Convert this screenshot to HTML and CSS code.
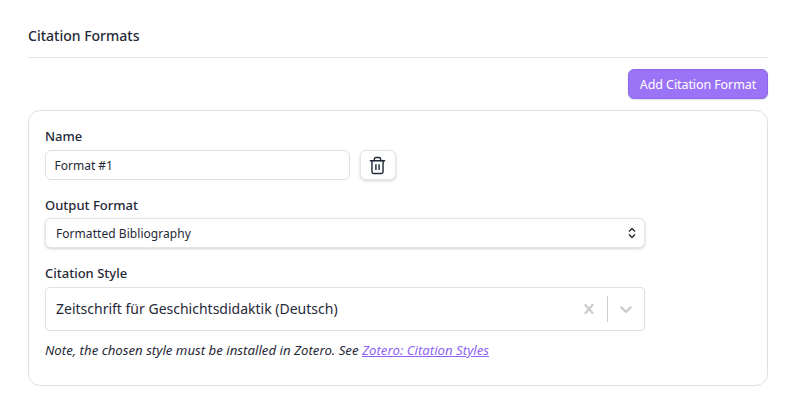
FILE: index.html
```html
<!DOCTYPE html>
<html lang="en">
<head>
<meta charset="utf-8">
<title>Citation Formats</title>
<link rel="stylesheet" href="styles.css">
</head>
<body>
<main class="page">
  <h2 class="title">Citation Formats</h2>
  <div class="actions"><button class="btn-add" type="button">Add Citation Format</button></div>
  <section class="card">
    <div class="field field-name">
      <label class="label">Name</label>
      <div class="name-row">
        <input class="input" type="text" value="Format #1">
        <button class="btn-icon" type="button" aria-label="Delete">
          <svg class="trash" width="19" height="19" viewBox="0 0 24 24" fill="none" stroke="#1f2937" stroke-width="1.8" stroke-linecap="round" stroke-linejoin="round"><path d="M3 6h18"/><path d="M5 6v14a2 2 0 0 0 2 2h10a2 2 0 0 0 2-2V6"/><path d="M8 6V4a2 2 0 0 1 2-2h4a2 2 0 0 1 2 2v2"/><path d="M10 11v6"/><path d="M14 11v6"/></svg>
        </button>
      </div>
    </div>
    <div class="field field-output">
      <label class="label">Output Format</label>
      <div class="select">
        <span>Formatted Bibliography</span>
        <svg width="10" height="12" viewBox="0 0 10 12" fill="none" stroke="#1f2937" stroke-width="1.4"><path d="M2 4.5 5 1.5 8 4.5"/><path d="M2 7.5 5 10.5 8 7.5"/></svg>
      </div>
    </div>
    <div class="field field-style">
      <label class="label">Citation Style</label>
      <div class="combo">
        <span class="combo-value">Zeitschrift für Geschichtsdidaktik (Deutsch)</span>
        <svg class="combo-clear" width="20" height="20" viewBox="0 0 20 20" fill="#cccccc"><path d="M14.348 14.849c-.469.469-1.229.469-1.697 0L10 11.819l-2.651 3.029c-.469.469-1.229.469-1.697 0-.469-.469-.469-1.229 0-1.697l2.758-3.15-2.759-3.152c-.469-.469-.469-1.228 0-1.697s1.228-.469 1.697 0L10 8.183l2.651-3.031c.469-.469 1.228-.469 1.697 0s.469 1.229 0 1.697l-2.758 3.152 2.758 3.15c.469.469.469 1.229 0 1.698z"/></svg>
        <span class="combo-sep"></span>
        <svg class="combo-arrow" width="20" height="20" viewBox="0 0 20 20" fill="#cccccc"><path d="M4.516 7.548c.436-.446 1.043-.481 1.576 0L10 11.295l3.908-3.747c.533-.481 1.141-.446 1.574 0 .436.445.408 1.197 0 1.615-.406.418-4.695 4.502-4.695 4.502-.217.223-.502.335-.787.335s-.57-.112-.789-.335c0 0-4.287-4.084-4.695-4.502s-.436-1.17 0-1.615z"/></svg>
      </div>
    </div>
    <p class="note">Note, the chosen style must be installed in Zotero. See <a href="#">Zotero: Citation Styles</a></p>
  </section>
</main>
</body>
</html>
```
FILE: styles.css
```css
* { box-sizing: border-box; }
html, body { margin: 0; background: #fff; }
body {
  font-family: "Noto Sans", "Open Sans", sans-serif;
  color: #1f2937;
  height: 405px;
  overflow: hidden;
}
.page { padding: 0 32px 0 28px; }
.title {
  margin: 0;
  height: 58px;
  padding-top: 26px;
  font-size: 14px;
  line-height: 20px;
  font-weight: 500;
  border-bottom: 1px solid #e5e5e5;
}
.actions { display: flex; justify-content: flex-end; padding-top: 11px; }
.btn-add {
  width: 140px;
  height: 30px;
  padding: 2px 0 0;
  border: 1px solid #8b6ae8;
  border-radius: 6px;
  background: #9b73f7;
  color: #fff;
  font: 400 12.5px/20px "Noto Sans", sans-serif;
  letter-spacing: -0.09px;
  box-shadow: 0 1px 2px rgba(0,0,0,.12);
}
.card {
  margin-top: 11px;
  height: 276px;
  padding: 16px 16px 0;
  border: 1px solid #e0e0e0;
  border-radius: 12px;
}
.label {
  display: block;
  font-size: 13px;
  line-height: 18px;
  font-weight: 500;
  color: #1f2937;
}
.name-row { display: flex; gap: 10px; margin-top: 5px; }
.input {
  width: 305px;
  height: 30px;
  padding: 0 8.5px;
  border: 1px solid #e0e0e0;
  border-radius: 6px;
  font: 400 12px "Noto Sans", sans-serif;
  color: #1f2937;
  outline: none;
}
.btn-icon {
  display: flex;
  align-items: center;
  justify-content: center;
  width: 36px;
  height: 30px;
  padding: 0 1px 0 0;
  border: 1px solid #e5e5e5;
  border-radius: 6px;
  background: #fff;
  box-shadow: 0 1px 3px rgba(0,0,0,.18);
}
.field-output { margin-top: 16px; }
.select {
  display: flex;
  align-items: center;
  justify-content: space-between;
  width: 600px;
  height: 30px;
  margin-top: 4px;
  padding: 0 7px 0 10px;
  border: 1px solid #e5e5e5;
  border-radius: 6px;
  background: #fff;
  font-size: 12px;
  letter-spacing: 0.05px;
  box-shadow: 0 1px 3px rgba(0,0,0,.18);
}
.field-style { margin-top: 16px; }
.combo {
  display: flex;
  align-items: center;
  width: 600px;
  height: 44px;
  margin-top: 5px;
  padding-left: 10px;
  border: 1px solid #e0e0e0;
  border-radius: 4px;
}
.combo-value { flex: 1; font-size: 14px; line-height: 20px; }
.combo-clear { margin-right: 8px; }
.combo-sep { width: 1px; height: 26px; background: #cccccc; }
.combo-arrow { margin: 0 8px; }
.note {
  margin: 10px 0 0;
  font-size: 13.22px;
  line-height: 18px;
  font-style: italic;
  color: #1f2937;
}
.note a { color: #8f63f7; text-decoration: underline; }
```
